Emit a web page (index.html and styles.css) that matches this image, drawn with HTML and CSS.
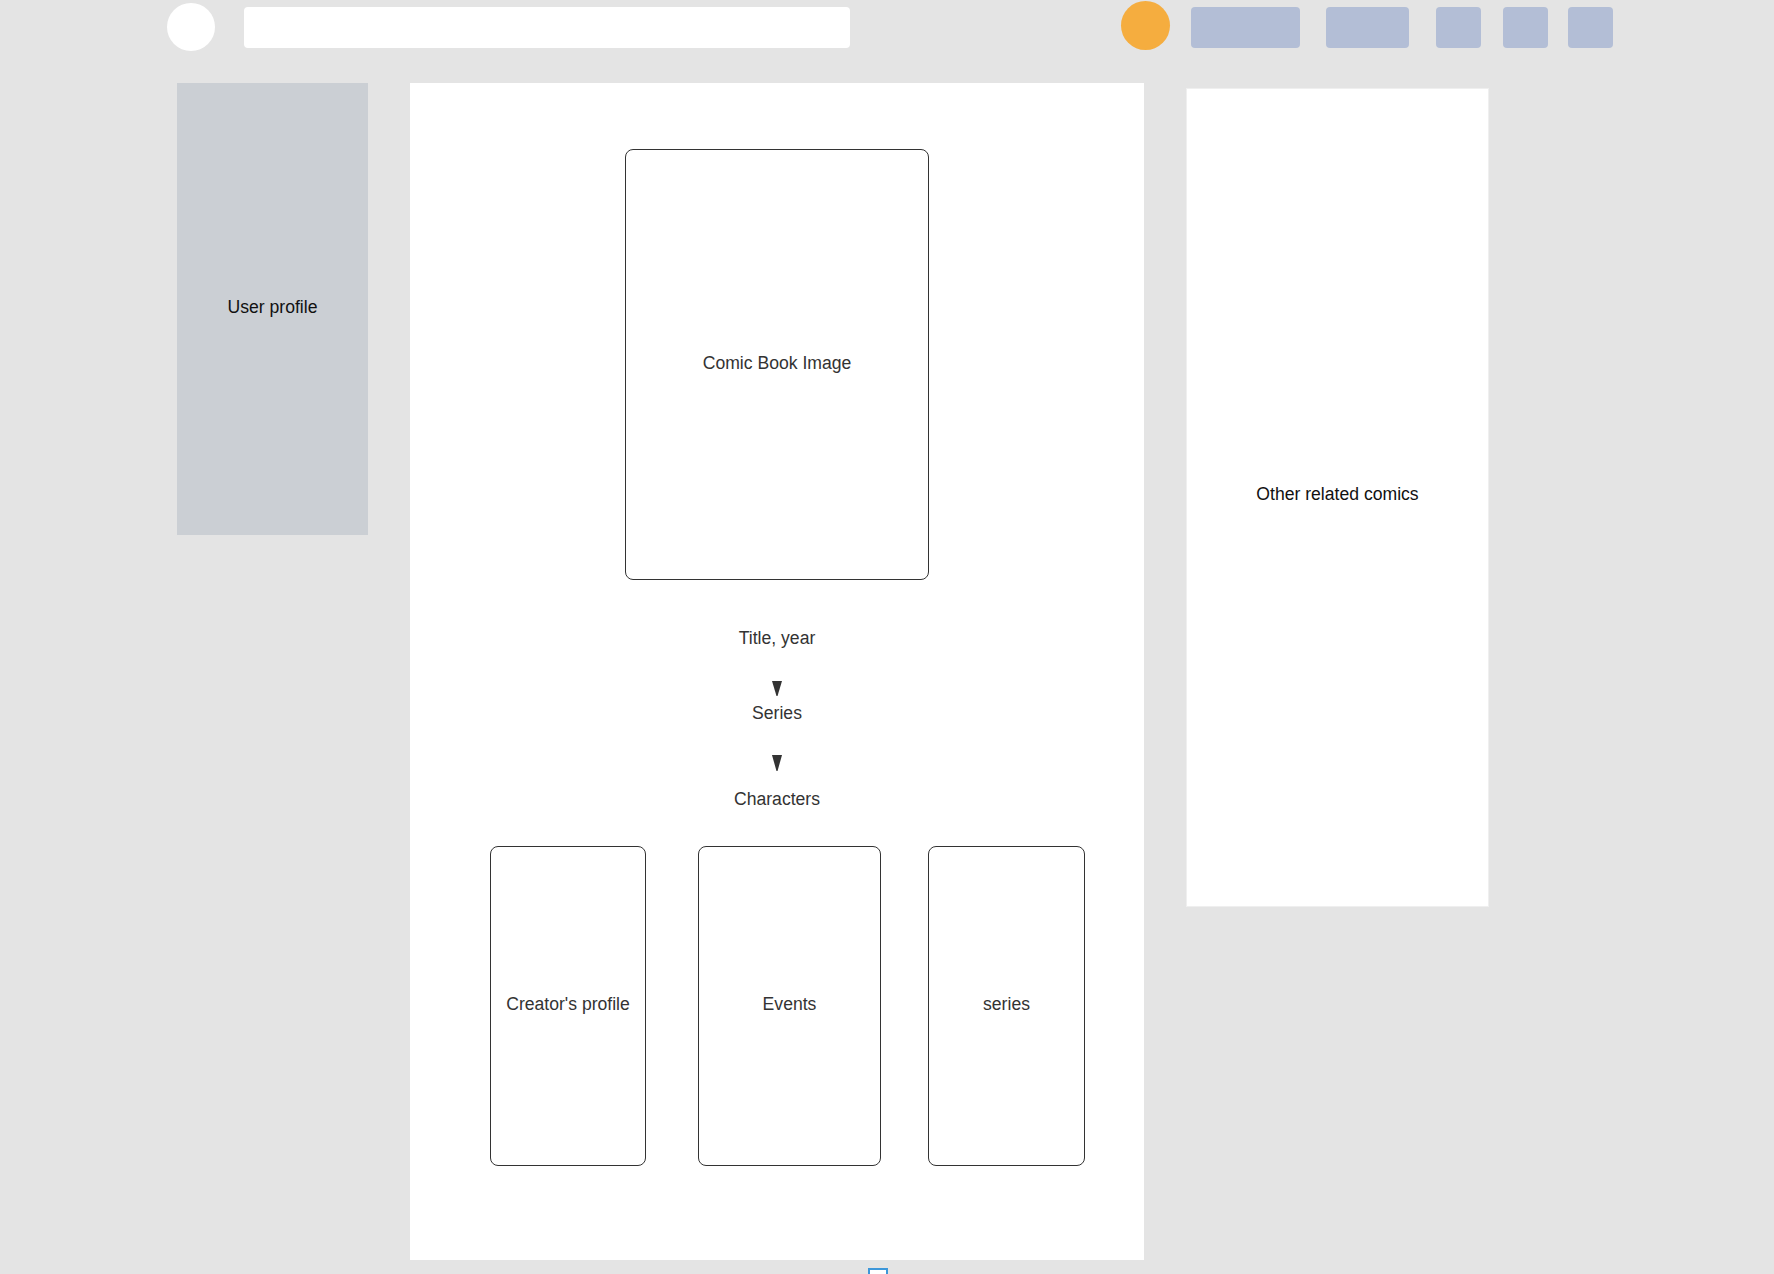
FILE: index.html
```html
<!DOCTYPE html>
<html lang="en">
<head>
<meta charset="utf-8">
<title>Comic page wireframe</title>
<link rel="stylesheet" href="styles.css">
</head>
<body>
<header class="topbar">
  <div class="logo"></div>
  <div class="search"></div>
  <div class="avatar"></div>
  <div class="btn btn-wide"></div>
  <div class="btn btn-mid"></div>
  <div class="btn btn-sq btn-3"></div>
  <div class="btn btn-sq btn-4"></div>
  <div class="btn btn-sq btn-5"></div>
</header>
<div class="content">
  <aside class="sidebar"><span>User profile</span></aside>
  <main class="panel">
    <div class="cover"><span>Comic Book Image</span></div>
    <div class="label title">Title, year</div>
    <svg class="arrow arrow-1" width="10" height="15" viewBox="0 0 10 15"><polygon points="0,0 10,0 5.5,15 4.5,15" fill="#333"/></svg>
    <div class="label series">Series</div>
    <svg class="arrow arrow-2" width="10" height="16" viewBox="0 0 10 16"><polygon points="0,0 10,0 5.5,16 4.5,16" fill="#333"/></svg>
    <div class="label characters">Characters</div>
    <div class="cards">
      <div class="card card-creator"><span>Creator's profile</span></div>
      <div class="card card-events"><span>Events</span></div>
      <div class="card card-series"><span>series</span></div>
    </div>
    <div class="handle"></div>
  </main>
  <aside class="related"><span>Other related comics</span></aside>
</div>
</body>
</html>
```

FILE: styles.css
```css
html, body {
  margin: 0;
  padding: 0;
}
body {
  background: #e4e4e4;
  font-family: "Liberation Sans", Arial, sans-serif;
  font-size: 17.6px;
  line-height: 20px;
  color: #333;
  width: 1774px;
  height: 1274px;
  overflow: hidden;
}
.topbar {
  display: flex;
  align-items: flex-start;
  height: 52px;
  padding-left: 167px;
}
.logo {
  width: 48px;
  height: 48px;
  margin-top: 3px;
  border-radius: 50%;
  background: #fff;
}
.search {
  width: 606px;
  height: 41px;
  margin-top: 7px;
  margin-left: 29px;
  background: #fff;
  border-radius: 4px;
}
.avatar {
  width: 49px;
  height: 49px;
  margin-top: 1px;
  margin-left: 271px;
  border-radius: 50%;
  background: #f5ad3f;
}
.btn {
  height: 41px;
  margin-top: 7px;
  background: #b3bed6;
  border-radius: 4px;
}
.btn-wide { width: 109px; margin-left: 21px; }
.btn-mid { width: 83px; margin-left: 26px; }
.btn-sq { width: 45px; }
.btn-3 { margin-left: 27px; }
.btn-4 { margin-left: 22px; }
.btn-5 { margin-left: 20px; }

.content {
  display: flex;
  align-items: flex-start;
  padding-left: 177px;
  margin-top: 31px;
}
.sidebar {
  box-sizing: border-box;
  width: 191px;
  height: 452px;
  padding-bottom: 5px;
  background: #cbcfd4;
  display: flex;
  align-items: center;
  justify-content: center;
  color: #111;
}
.panel {
  position: relative;
  width: 734px;
  height: 1177px;
  margin-left: 42px;
  background: #fff;
  display: flex;
  flex-direction: column;
  align-items: center;
}
.cover {
  box-sizing: border-box;
  width: 304px;
  height: 431px;
  margin-top: 66px;
  padding-bottom: 3px;
  border: 1px solid #333;
  border-radius: 8px;
  display: flex;
  align-items: center;
  justify-content: center;
}
.label {
  height: 20px;
  text-align: center;
}
.title { margin-top: 48px; }
.arrow { display: block; }
.arrow-1 { margin-top: 33px; }
.series { margin-top: 7px; }
.arrow-2 { margin-top: 32px; }
.characters { margin-top: 18px; }
.cards {
  align-self: stretch;
  display: flex;
  padding-left: 80px;
  margin-top: 37px;
}
.card {
  box-sizing: border-box;
  height: 320px;
  padding-bottom: 4px;
  border: 1px solid #333;
  border-radius: 8px;
  display: flex;
  align-items: center;
  justify-content: center;
}
.card-creator { width: 156px; }
.card-events { width: 183px; margin-left: 52px; }
.card-series { width: 157px; margin-left: 47px; }
.handle {
  position: absolute;
  left: 458px;
  top: 1185px;
  width: 16px;
  height: 16px;
  border: 2px solid #3d97d9;
  background: #fff;
}
.related {
  box-sizing: border-box;
  width: 303px;
  height: 819px;
  margin-left: 42px;
  margin-top: 5px;
  padding-bottom: 7px;
  background: #fff;
  border: 1px solid #efefef;
  display: flex;
  align-items: center;
  justify-content: center;
  color: #111;
}
```
